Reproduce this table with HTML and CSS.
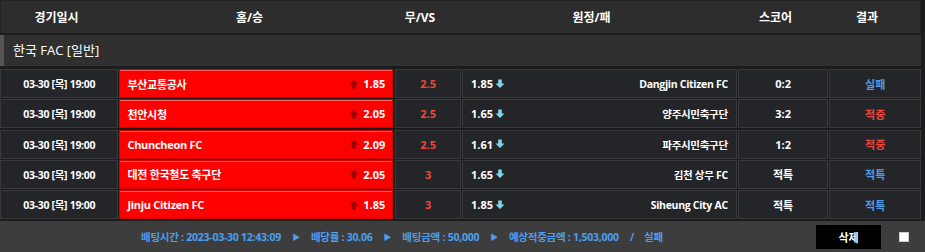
FILE: index.html
```html
<!DOCTYPE html>
<html lang="ko">
<head>
<meta charset="utf-8">
<link rel="stylesheet" href="styles.css">
</head>
<body>
<div class="wrap">
  <div class="head">
    <div class="c date">경기일시</div>
    <div class="c home">홈/승</div>
    <div class="c vs">무/VS</div>
    <div class="c away">원정/패</div>
    <div class="c score">스코어</div>
    <div class="c result">결과</div>
  </div>
  <div class="league">한국 FAC [일반]</div>
  <div class="rows">
    <div class="row">
      <div class="cell date">03-30 [목] 19:00</div>
      <div class="cell home sel"><span class="team">부산교통공사</span><span class="odd"><svg class="up" viewBox="0 0 10 10"><path d="M5 1 L9.5 5.5 H6.8 V9.5 H3.2 V5.5 H0.5 Z"/></svg>1.85</span></div>
      <div class="cell vs">2.5</div>
      <div class="cell away"><span class="odd">1.85<svg class="down" viewBox="0 0 10 10"><path d="M5 9 L9.5 4.5 H6.8 V0.5 H3.2 V4.5 H0.5 Z"/></svg></span><span class="team">Dangjin Citizen FC</span></div>
      <div class="cell score">0:2</div>
      <div class="cell result blue">실패</div>
    </div>
    <div class="row">
      <div class="cell date">03-30 [목] 19:00</div>
      <div class="cell home sel"><span class="team">천안시청</span><span class="odd"><svg class="up" viewBox="0 0 10 10"><path d="M5 1 L9.5 5.5 H6.8 V9.5 H3.2 V5.5 H0.5 Z"/></svg>2.05</span></div>
      <div class="cell vs">2.5</div>
      <div class="cell away"><span class="odd">1.65<svg class="down" viewBox="0 0 10 10"><path d="M5 9 L9.5 4.5 H6.8 V0.5 H3.2 V4.5 H0.5 Z"/></svg></span><span class="team">양주시민축구단</span></div>
      <div class="cell score">3:2</div>
      <div class="cell result red">적중</div>
    </div>
    <div class="row">
      <div class="cell date">03-30 [목] 19:00</div>
      <div class="cell home sel"><span class="team">Chuncheon FC</span><span class="odd"><svg class="up" viewBox="0 0 10 10"><path d="M5 1 L9.5 5.5 H6.8 V9.5 H3.2 V5.5 H0.5 Z"/></svg>2.09</span></div>
      <div class="cell vs">2.5</div>
      <div class="cell away"><span class="odd">1.61<svg class="down" viewBox="0 0 10 10"><path d="M5 9 L9.5 4.5 H6.8 V0.5 H3.2 V4.5 H0.5 Z"/></svg></span><span class="team">파주시민축구단</span></div>
      <div class="cell score">1:2</div>
      <div class="cell result red">적중</div>
    </div>
    <div class="row">
      <div class="cell date">03-30 [목] 19:00</div>
      <div class="cell home sel"><span class="team">대전 한국철도 축구단</span><span class="odd"><svg class="up" viewBox="0 0 10 10"><path d="M5 1 L9.5 5.5 H6.8 V9.5 H3.2 V5.5 H0.5 Z"/></svg>2.05</span></div>
      <div class="cell vs">3</div>
      <div class="cell away"><span class="odd">1.65<svg class="down" viewBox="0 0 10 10"><path d="M5 9 L9.5 4.5 H6.8 V0.5 H3.2 V4.5 H0.5 Z"/></svg></span><span class="team">김천 상무 FC</span></div>
      <div class="cell score">적특</div>
      <div class="cell result blue">적특</div>
    </div>
    <div class="row">
      <div class="cell date">03-30 [목] 19:00</div>
      <div class="cell home sel"><span class="team">Jinju Citizen FC</span><span class="odd"><svg class="up" viewBox="0 0 10 10"><path d="M5 1 L9.5 5.5 H6.8 V9.5 H3.2 V5.5 H0.5 Z"/></svg>1.85</span></div>
      <div class="cell vs">3</div>
      <div class="cell away"><span class="odd">1.85<svg class="down" viewBox="0 0 10 10"><path d="M5 9 L9.5 4.5 H6.8 V0.5 H3.2 V4.5 H0.5 Z"/></svg></span><span class="team">Siheung City AC</span></div>
      <div class="cell score">적특</div>
      <div class="cell result blue">적특</div>
    </div>
  </div>
  <div class="foot">
    <div class="info">
      <span>배팅시간 : 2023-03-30 12:43:09</span><span class="tri">▶</span>
      <span>배당률 : 30.06</span><span class="tri">▶</span>
      <span>배팅금액 : 50,000</span><span class="tri">▶</span>
      <span>예상적중금액 : 1,503,000</span><span class="slash">/</span><span>실패</span>
    </div>
    <button class="del">삭제</button>
    <span class="chk"></span>
  </div>
</div>
</body>
</html>
```

FILE: styles.css
```css
html, body {
  margin: 0;
  padding: 0;
  background: #1c1c1c;
}
body {
  font-family: "Open Sans", "Noto Sans CJK KR", sans-serif;
  color: #fff;
  width: 925px;
  height: 252px;
  overflow: hidden;
}
.wrap {
  width: 921px;
}
.head {
  display: flex;
  height: 32px;
  background: #2d2d2d;
  border: 1px solid #232323;
  border-bottom: 1px solid #1e1e1e;
  align-items: center;
  font-size: 12px;
  font-weight: 700;
}
.head .c { text-align: center; }
.date { width: 119px; }
.home { width: 275px; }
.vs { width: 66px; }
.away { width: 276px; }
.score { width: 91px; }
.result { width: 92px; }
.head .date { width: 111px; }
.head .home { width: 275px; }
.head .vs { width: 66px; }
.head .away { width: 277px; }
.league {
  margin-top: 1px;
  height: 31px;
  line-height: 30px;
  background: #303030;
  border-left: 4px solid #555;
  padding-left: 9px;
  font-size: 13px;
}
.rows {
  display: flex;
  flex-direction: column;
  gap: 1.25px;
  padding-top: 3px;
}
.row {
  display: flex;
  height: 29px;
  gap: 1px;
  font-size: 11px;
  font-weight: 700;
}
.cell {
  box-sizing: border-box;
  background: #242528;
  border: 1px solid #38393c;
  display: flex;
  align-items: center;
  justify-content: center;
  white-space: nowrap;
}
.cell.date { width: 119px; font-size: 10.5px; letter-spacing: -0.3px; }
.cell.home {
  width: 275px;
  justify-content: space-between;
  padding: 0 7px 0 7px;
}
.cell.sel {
  background: #ff0000;
  border: 1px solid #d40000;
  box-shadow: inset 0 1px 0 #ff5a5a;
}
.cell.vs {
  width: 66px;
  margin-left: 1px;
  color: #f0453a;
}
.cell.away {
  width: 276px;
  justify-content: space-between;
  padding: 0 8px 0 8px;
}
.cell.score { width: 91px; }
.cell.result { width: 92px; }
.blue { color: #4f9be6; }
.red { color: #f0453a; }
.team { font-size: 10.5px; letter-spacing: -0.3px; }
.home .team { font-size: 11px; }
.odd {
  display: inline-flex;
  align-items: center;
}
.up {
  width: 10px;
  height: 10px;
  fill: #9b0000;
  margin-right: 4px;
}
.down {
  width: 10px;
  height: 10px;
  fill: #7dd6ea;
  margin-left: 2px;
}
.foot {
  margin-top: 2px;
  height: 31px;
  background: #3d3d3d;
  display: flex;
  align-items: center;
  width: 925px;
  white-space: nowrap;
}
.info {
  margin-left: 141px;
  color: #4d9fee;
  font-size: 10.5px;
  letter-spacing: -0.25px;
  font-weight: 700;
  display: flex;
  align-items: center;
  flex-shrink: 0;
}
.tri {
  font-size: 8px;
  margin: 0 11px 0 11px;
}
.slash { margin: 0 10px 0 11px; }
.del {
  margin-left: auto;
  width: 65px;
  height: 24px;
  background: #000;
  color: #fff;
  border: none;
  font-family: "Noto Sans CJK KR", sans-serif;
  font-size: 11px;
  font-weight: 700;
  padding: 0;
  flex-shrink: 0;
}
.chk {
  margin-left: 18px;
  margin-right: 16px;
  width: 8px;
  height: 8px;
  background: #fff;
  border: 1px solid #ccc;
  flex-shrink: 0;
}
```
